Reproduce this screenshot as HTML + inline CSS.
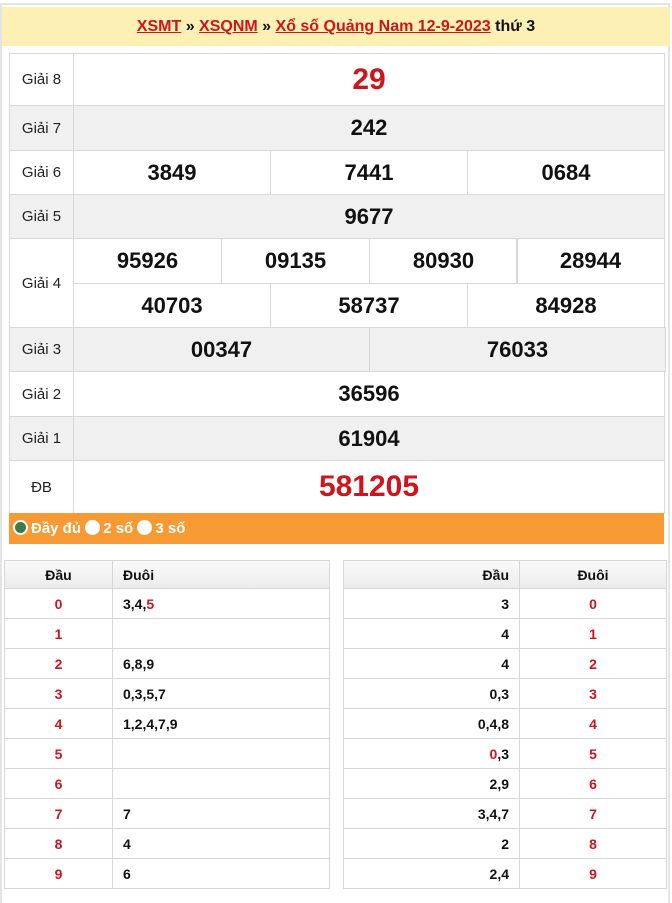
<!DOCTYPE html>
<html><head><meta charset="utf-8"><style>
*{margin:0;padding:0;box-sizing:border-box}
body{width:672px;height:900px;background:#fff;font-family:"Liberation Sans",sans-serif;position:relative;overflow:hidden}
.frame{position:absolute;left:0;top:3px;width:670px;height:900px;border:2px solid #e4e4e4;border-bottom:none}
.hd{position:absolute;left:2px;top:7px;width:668px;height:39px;background:#fcf0b4;text-align:center;font-size:16px;font-weight:bold;line-height:39px;color:#111}
.hd a{color:#d0141b;text-decoration:underline}
.c{position:absolute;border:1px solid #d8d8d8;display:flex;align-items:center;justify-content:center;font-weight:bold;font-size:22px;color:#111}
.g{background:#f0f0f0}
.l{font-weight:normal;font-size:15px;color:#222}
.r{color:#d0141b}
.bar{position:absolute;left:9px;top:513px;width:655px;height:31px;background:#f79a33;color:#fff;font-weight:bold;font-size:15px;line-height:31px;padding-left:4px}
.dot{display:inline-block;width:15px;height:15px;border-radius:50%;background:#fff;vertical-align:-2px;margin-right:3px}
.t{position:absolute;font-size:14px;font-weight:bold;color:#111;display:flex;align-items:center;border:1px solid #d6d6d6}
</style></head><body>
<div class="frame"></div>
<div class="hd"><a>XSMT</a> » <a>XSQNM</a> » <a>Xổ số Quảng Nam 12-9-2023</a> thứ 3</div>
<div id="m"></div>
<div class="bar"><span class="dot" style="background:#3f7a4a;border:2px solid #fff"></span>Đầy đủ <span class="dot"></span>2 số <span class="dot"></span>3 số</div>
<div id="b"></div>
<script>
var h='';
function cell(x,y,w,hh,t,cls){h+='<div class="c '+(cls||'')+'" style="left:'+x+'px;top:'+y+'px;width:'+(w+1)+'px;height:'+(hh+1)+'px">'+t+'</div>';}
var L=9,LW=64,X=73,W=591;
var rows=[[53,52,'Giải 8',[['29']],'',1],[105,45,'Giải 7',[['242']],'g'],[150,44,'Giải 6',[['3849','7441','0684']],''],[194,44,'Giải 5',[['9677']],'g'],[238,89,'Giải 4',[['95926','09135','80930','28944'],['40703','58737','84928']],''],[327,44,'Giải 3',[['00347','76033']],'g'],[371,45,'Giải 2',[['36596']],''],[416,44,'Giải 1',[['61904']],'g'],[460,53,'ĐB',[['581205']],'',2]];
rows.forEach(function(r){
 cell(L,r[0],LW,r[1],r[2],'l '+r[4]);
 var sub=r[3],sh=r[1]/sub.length;
 sub.forEach(function(s,i){var cw=W/s.length;s.forEach(function(v,j){
  var st=r[5]==1?'r" style="':'';
  cell(X+Math.round(j*cw),r[0]+Math.round(i*sh),Math.round(cw),Math.round(sh),r[5]?'<span style="color:#d0141b;font-size:'+(r[5]==1?30:30)+'px">'+v+'</span>':v,r[4]);
 });});
});
document.getElementById('m').innerHTML=h;
h='';
function t(x,y,w,hh,txt,al,bg){h+='<div class="t" style="left:'+x+'px;top:'+y+'px;width:'+(w+1)+'px;height:'+(hh+1)+'px;justify-content:'+al+';'+(bg?'background:linear-gradient(#fafafa,#ececec);':'')+'padding:0 10px">'+txt+'</div>';}
var R='<span class="r">',E='</span>';
var left=['3,4,'+R+'5'+E,'','6,8,9','0,3,5,7','1,2,4,7,9','','','7','4','6'];
var right=['3','4','4','0,3','0,4,8',R+'0'+E+',3','2,9','3,4,7','2','2,4'];
t(4,560,108,28,'Đầu','center',1);t(112,560,217,28,'Đuôi','flex-start',1);
t(343,560,176,28,'Đầu','flex-end',1);t(519,560,147,28,'Đuôi','center',1);
for(var i=0;i<10;i++){var y=588+i*30;
 t(4,y,108,30,R+i+E,'center');t(112,y,217,30,left[i],'flex-start');
 t(343,y,176,30,right[i],'flex-end');t(519,y,147,30,R+i+E,'center');}
document.getElementById('b').innerHTML=h;
</script>
</body></html>
